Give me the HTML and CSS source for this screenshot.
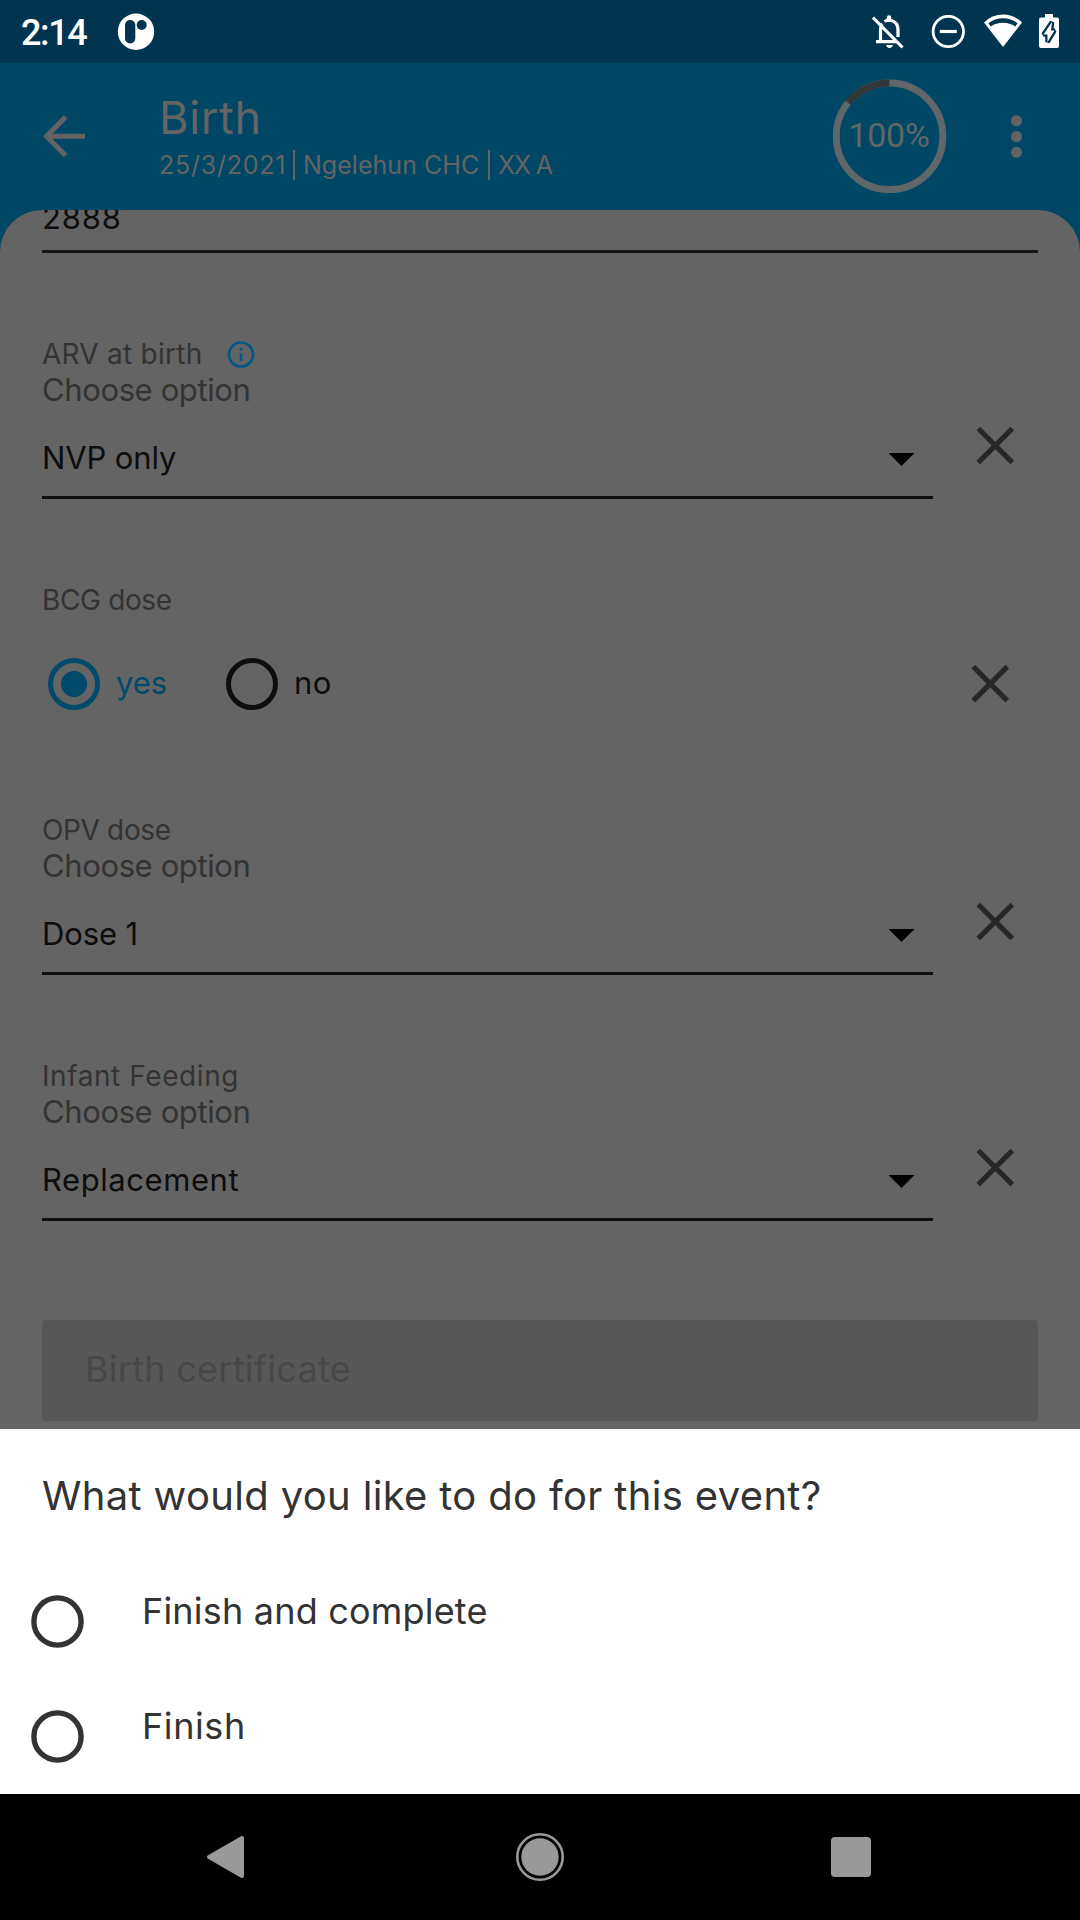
FILE: index.html
```
<!DOCTYPE html>
<html lang="en">
<head>
<meta charset="utf-8">
<title>Birth</title>
<link rel="stylesheet" href="styles.css">
</head>
<body>
<div class="screen">
  <header class="status">
    <span class="clock">2:14</span>
    <svg class="app-logo" width="38" height="42" viewBox="0 0 38 42"><circle cx="19" cy="20.700" r="18.200" fill="#fff"/><rect x="8" y="9" width="10.300" height="23.500" rx="5.100" fill="#003450"/><circle cx="24.700" cy="14" r="5" fill="#003450"/></svg>
    <div class="status-icons">
      <svg width="32" height="34" viewBox="0 0 32 34" fill="none" stroke="#fff" stroke-width="3.200"><path d="M1 2.500 30.500 32.500M4 26.700h21M8.500 26V15q0-4 2-6M12.500 6.500q3-2 6-1.200Q26 7 26 15v7"/><path d="M17 2.500v2" stroke-width="4.500" stroke-linecap="round"/><path d="M14 30h7q-1 3-3.500 3T14 30Z" fill="#fff" stroke="none"/></svg>
      <svg class="dnd" width="34" height="34" viewBox="0 0 34 34" fill="none" stroke="#fff"><circle cx="17.300" cy="16.500" r="15.200" stroke-width="2.800"/><path d="M8.800 16.500h17" stroke-width="3.200"/></svg>
      <svg class="wifi" width="38" height="34" viewBox="0 0 38 34"><path d="M0 8.500Q8 .5 19 .5t19 8L19 33Z" fill="#fff"/><path d="M4.400 9.300Q11 4.200 19 4.200t14.600 5.100L31.200 12.500Q26 8.800 19 8.800T6.800 12.500Z" fill="#003450"/></svg>
      <svg class="battery" width="20" height="34" viewBox="0 0 20 34"><path d="M6 0h8v3.500h4q2 0 2 2V32q0 2-2 2H2q-2 0-2-2V5.500q0-2 2-2h4Z" fill="#fff"/><path d="M13 8 4.500 20.500h4V28L15.500 16.500H12Z" fill="#fff" stroke="#003450" stroke-width="4.600" stroke-linejoin="miter" stroke-miterlimit="2" paint-order="stroke"/></svg>
    </div>
  </header>

  <div class="toolbar">
    <svg class="back" width="42" height="42" viewBox="0 0 42 42" fill="none" stroke="#646464" stroke-width="5"><path d="M42 21.300H4M22.500 2.100 3.500 21.300l19 19.200"/></svg>
    <div class="heading">
      <div class="title">Birth</div>
      <div class="subtitle"><span class="date">25/3/2021</span><i class="bar"></i><span class="unit">Ngelehun CHC</span><i class="bar"></i><span class="combo">XX A</span></div>
    </div>
    <div class="progress">
      <svg class="ring" width="114" height="114" viewBox="0 0 114 114" fill="none" stroke-width="7"><circle cx="56.500" cy="57.300" r="53.300" stroke="#5f6769"/><path d="M56.500 4A53.300 53.300 0 0 0 15.100 23.700" stroke="#323739"/></svg>
      <span class="percent">100%</span>
    </div>
    <svg class="more" width="12" height="44" viewBox="0 0 12 44" fill="#646464"><circle cx="6.500" cy="5.700" r="5.500"/><circle cx="6.500" cy="21.500" r="5.500"/><circle cx="6.500" cy="37.300" r="5.500"/></svg>
  </div>

  <main class="card">
    <div class="number"><span>2888</span></div>

    <section class="field first">
      <div class="control">
        <div class="label"><span class="arv">ARV at birth</span><svg class="info" width="28" height="28" viewBox="0 0 28 28" fill="none" stroke="#005a85" stroke-width="2.700"><circle cx="14" cy="14.500" r="12"/><path d="M14 13.200v7.800M14 7.800v2.800"/></svg></div>
        <div class="hint">Choose option</div>
        <div class="value"><span class="nvp">NVP only</span><i class="caret"></i></div>
      </div>
      <svg class="clear" viewBox="0 0 38 38"><path d="M2.300 2.500 36.300 36.500M36.300 2.500 2.300 36.500"/></svg>
    </section>

    <section class="bcg">
      <div class="label"><span class="tight">BCG dose</span></div>
      <div class="choices">
        <i class="radio on"></i><span class="yes">yes</span>
        <i class="radio"></i><span class="no">no</span>
        <svg class="clear" viewBox="0 0 38 38"><path d="M2.300 1.700 36.300 35.700M36.300 1.700 2.300 35.700"/></svg>
      </div>
    </section>

    <section class="field">
      <div class="control">
        <div class="label"><span class="tight">OPV dose</span></div>
        <div class="hint">Choose option</div>
        <div class="value"><span class="dose">Dose 1</span><i class="caret"></i></div>
      </div>
      <svg class="clear" viewBox="0 0 38 38"><path d="M2.300 2.500 36.300 36.500M36.300 2.500 2.300 36.500"/></svg>
    </section>

    <section class="field feeding">
      <div class="control">
        <div class="label"><span class="wide">Infant Feeding</span></div>
        <div class="hint">Choose option</div>
        <div class="value"><span class="wide">Replacement</span><i class="caret"></i></div>
      </div>
      <svg class="clear" viewBox="0 0 38 38"><path d="M2.300 2.500 36.300 36.500M36.300 2.500 2.300 36.500"/></svg>
    </section>

    <div class="certificate">Birth certificate</div>
  </main>

  <section class="sheet">
    <h1>What would you like to do for this event?</h1>
    <div class="option"><svg class="ring-option" width="54" height="54" viewBox="0 0 54 54"><circle cx="26.500" cy="27.500" r="23.600"/></svg><span>Finish and complete</span></div>
    <div class="option"><svg class="ring-option" width="54" height="54" viewBox="0 0 54 54"><circle cx="26.500" cy="27.500" r="23.600"/></svg><span class="finish">Finish</span></div>
  </section>

  <nav class="navbar">
    <svg class="nav-back" width="40" height="46" viewBox="0 0 40 46"><path d="M3 23 36 4v38Z" fill="#999" stroke="#999" stroke-width="4" stroke-linejoin="round"/></svg>
    <svg class="nav-home" width="48" height="48" viewBox="0 0 48 48"><circle cx="24" cy="24" r="22.700" fill="none" stroke="#999" stroke-width="2.600"/><circle cx="24" cy="24" r="18.700" fill="#999"/></svg>
    <i class="nav-recent"></i>
  </nav>
</div>
</body>
</html>
```
FILE: styles.css
```
* { box-sizing: border-box; }
body { margin: 0; }
i { display: block; flex: none; }
svg { display: block; flex: none; }
span { white-space: nowrap; }

.screen {
  width: 1080px;
  height: 1920px;
  display: flex;
  flex-direction: column;
  overflow: hidden;
  background: #004766;
  font-family: Inter, Roboto, sans-serif;
}

/* Status bar */
.status {
  height: 63px;
  flex: none;
  display: flex;
  align-items: flex-start;
  padding-left: 21px;
  background: #003450;
  color: #fff;
}
.clock {
  width: 96px;
  padding-top: 12px;
  font: 500 36px/42px Roboto, sans-serif;
  letter-spacing: -1.4px;
}
.app-logo { margin-top: 11px; }
.status-icons { display: flex; margin: 15px 21px 0 auto; }
.dnd { margin-left: 27px; }
.wifi { margin-left: 19px; margin-top: -1px; }
.battery { margin-left: 17px; margin-top: -1px; }

/* Toolbar */
.toolbar {
  height: 147px;
  flex: none;
  display: flex;
  align-items: flex-start;
  padding: 0 58px 0 43px;
  color: #646464;
}
.back { margin-top: 52px; }
.heading { margin-left: 74px; padding-top: 28px; }
.title {
  font-size: 45px;
  line-height: 54px;
  letter-spacing: 0.7px;
}
.subtitle {
  display: flex;
  align-items: center;
  height: 40px;
  font-size: 25px;
  line-height: 40px;
}
.date { width: 134px; letter-spacing: 0.75px; }
.unit { width: 185px; margin-left: 8px; letter-spacing: 0.03px; }
.combo { margin-left: 8px; letter-spacing: -1.1px; }
.bar { width: 2px; height: 30px; background: #646464; }
.progress {
  display: grid;
  place-items: center;
  width: 114px;
  margin: 16px 63px 0 auto;
}
.ring, .percent { grid-area: 1 / 1; }
.percent {
  margin: -2px 2px 0 0;
  font: 400 34px/40px Roboto, sans-serif;
  letter-spacing: -0.2px;
  color: #5f6769;
}
.more { margin-top: 52px; }

/* Form */
.card {
  height: 1219px;
  flex: none;
  overflow: hidden;
  padding: 0 42px;
  border-radius: 42px 42px 0 0;
  background: #646464;
  color: #0d0d0d;
}
.number {
  height: 53px;
  margin-top: -10px;
  border-bottom: 3px solid #151515;
  font-size: 31px;
  line-height: 36px;
  letter-spacing: 0.8px;
}
.field { display: flex; margin-top: 101px; }
.first, .feeding { margin-top: 83px; }
.control { width: 891px; }
.label, .hint { height: 36px; line-height: 36px; color: #333; }
.label { display: flex; align-items: center; font-size: 28px; }
.hint { font-size: 31px; letter-spacing: -0.38px; }
.value {
  display: flex;
  justify-content: space-between;
  height: 59px;
  margin-top: 32px;
  border-bottom: 3px solid #0f0f0f;
  font-size: 31px;
  line-height: 36px;
}
.caret {
  width: 26px;
  height: 13px;
  margin: 13px 18.5px 0 0;
  background: #000;
  clip-path: polygon(0 0, 100% 0, 50% 100%);
}
.arv { letter-spacing: 0.25px; }
.nvp { letter-spacing: -0.1px; }
.tight { letter-spacing: -0.35px; }
.dose { letter-spacing: -0.1px; }
.wide { letter-spacing: 0.57px; }
.info { margin-left: 25px; }
.clear {
  width: 38px;
  height: 38px;
  stroke: #272727;
  stroke-width: 5.2px;
  fill: none;
}
.field .clear { margin: 90px 0 0 43px; }

.bcg { margin-top: 83px; }
.choices {
  display: flex;
  align-items: center;
  height: 54px;
  margin-top: 39px;
  padding-left: 6px;
  font-size: 31px;
  line-height: 36px;
}
.choices .clear { margin: 0 29px 0 auto; }
.radio {
  width: 52px;
  height: 52px;
  border: 5px solid #0d0d0d;
  border-radius: 50%;
}
.radio.on {
  border-color: #004a6b;
  background: radial-gradient(circle, #004a6b 12.500px, transparent 13.500px);
}
.yes { width: 110px; margin: -2px 0 0 16px; letter-spacing: -0.1px; color: #004a6b; }
.no { margin: -2px 0 0 16px; letter-spacing: 0.5px; }

.certificate {
  height: 101px;
  margin-top: 99px;
  padding-left: 43px;
  border-radius: 4px;
  background: #575757;
  color: #474747;
  font-size: 36px;
  line-height: 98px;
  letter-spacing: 0.27px;
}

/* Bottom sheet */
.sheet {
  height: 365px;
  flex: none;
  padding: 0 31px;
  background: #fff;
  color: #333;
}
h1 {
  height: 134px;
  margin: 0 0 0 11px;
  padding-top: 42px;
  font-size: 40px;
  font-weight: 400;
  line-height: 50px;
  letter-spacing: 0.34px;
  white-space: nowrap;
}
.option {
  display: flex;
  height: 115px;
  padding-top: 31px;
  font-size: 36px;
  line-height: 34px;
  letter-spacing: 0.2px;
}
.ring-option { fill: none; stroke: #333; stroke-width: 5.4px; }
.option span { margin-left: 57px; }
.option .finish { letter-spacing: 0.6px; }

/* System navigation */
.navbar {
  height: 126px;
  flex: none;
  display: flex;
  align-items: center;
  padding-left: 206px;
  background: #000;
}
.nav-home { margin-left: 270px; }
.nav-recent {
  width: 40px;
  height: 40px;
  margin-left: 267px;
  border-radius: 4px;
  background: #999;
}
```
